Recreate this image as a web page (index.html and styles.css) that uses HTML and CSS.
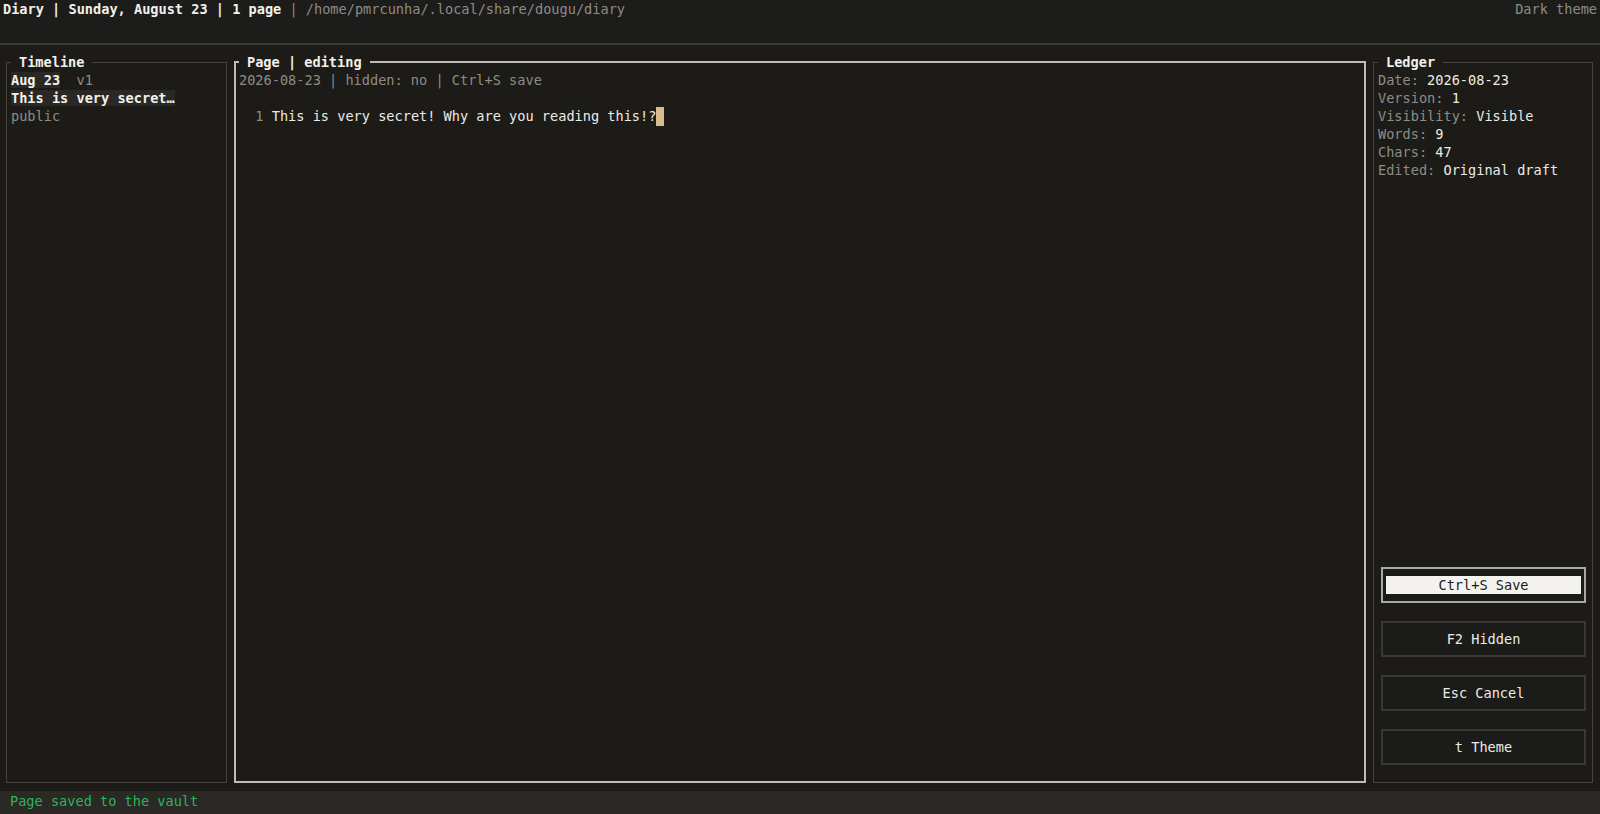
FILE: index.html
```html
<!DOCTYPE html>
<html lang="en">
<head>
<meta charset="utf-8">
<title>Diary</title>
<link rel="stylesheet" href="styles.css">
</head>
<body>
<div class="app">
  <header class="topbar">
    <div class="topbar-left"><span class="strong">Diary | Sunday, August 23 | 1 page</span><span class="dim"> | /home/pmrcunha/.local/share/dougu/diary</span></div>
    <div class="topbar-right dim">Dark theme</div>
  </header>

  <main class="workspace">
    <fieldset class="panel panel-timeline">
      <legend class="panel-title">Timeline</legend>
      <div class="entry">
        <div class="line"><span class="sel strong">Aug 23</span><span class="dim">  v1</span></div>
        <div class="line"><span class="sel strong">This is very secret…</span></div>
        <div class="line dim">public</div>
      </div>
    </fieldset>

    <fieldset class="panel panel-page">
      <legend class="panel-title">Page | editing</legend>
      <div class="line dim">2026-08-23 | hidden: no | Ctrl+S save</div>
      <div class="line"> </div>
      <div class="line editor-line"><span class="gutter">  1 </span><span class="text">This is very secret! Why are you reading this!?</span><span class="cursor"></span></div>
    </fieldset>

    <fieldset class="panel panel-ledger">
      <legend class="panel-title">Ledger</legend>
      <div class="ledger-info">
        <div class="line"><span class="dim">Date: </span>2026-08-23</div>
        <div class="line"><span class="dim">Version: </span>1</div>
        <div class="line"><span class="dim">Visibility: </span>Visible</div>
        <div class="line"><span class="dim">Words: </span>9</div>
        <div class="line"><span class="dim">Chars: </span>47</div>
        <div class="line"><span class="dim">Edited: </span>Original draft</div>
      </div>
      <div class="actions">
        <button class="btn btn-focus"><span class="btn-label">Ctrl+S Save</span></button>
        <button class="btn"><span class="btn-label">F2 Hidden</span></button>
        <button class="btn"><span class="btn-label">Esc Cancel</span></button>
        <button class="btn"><span class="btn-label">t Theme</span></button>
      </div>
    </fieldset>
  </main>

  <footer class="statusbar">Page saved to the vault</footer>
</div>
</body>
</html>
```

FILE: styles.css
```css
* { box-sizing: border-box; }

html, body {
  margin: 0;
  padding: 0;
  width: 1600px;
  height: 814px;
  overflow: hidden;
  background: #1c1b18;
}

body {
  font-family: "DejaVu Sans Mono", "Liberation Mono", monospace;
  font-size: 13.6px;
  line-height: 18px;
  color: #ecebe4;
}

.app {
  display: flex;
  flex-direction: column;
  height: 814px;
}

.strong { font-weight: bold; color: #f2f1ea; }
.dim { color: #8d8c86; font-weight: normal; }

.topbar {
  height: 45px;
  flex: none;
  display: flex;
  justify-content: space-between;
  align-items: flex-start;
  padding: 0 3px 0 3px;
  background: #1c1c1b;
  border-bottom: 2px solid #393835;
}

.topbar-left, .topbar-right { white-space: pre; height: 18px; }

.workspace {
  flex: 1;
  display: flex;
  gap: 7px;
  padding: 8px 7px 8px 6px;
  min-height: 0;
}

.panel {
  margin: 0;
  min-width: 0;
  border: 1px solid #45443f;
  padding: 0 4px 0 4px;
}

.panel-title {
  margin: 0;
  padding: 0 8px;
  font-weight: bold;
  color: #f2f1ea;
  line-height: 18px;
  white-space: pre;
}

.panel-timeline { width: 221px; flex: none; }
.panel-ledger {
  width: 220px;
  flex: none;
  display: flex;
  flex-direction: column;
  padding-bottom: 17px;
}

.panel-page {
  flex: 1;
  border: 2px solid #bdbcb5;
  padding: 0 3px;
}

.line { height: 18px; white-space: pre; }

.sel { background: #292824; }

.gutter { color: #8d8c86; }
.text { color: #ecebe4; }

.cursor {
  display: inline-block;
  width: 8px;
  height: 19px;
  vertical-align: top;
  background: #d8bc8f;
}

.ledger-info { flex: none; }

.actions {
  margin-top: auto;
  display: flex;
  flex-direction: column;
  gap: 18px;
  padding: 0 2px 0 3px;
}

.btn {
  display: flex;
  align-items: center;
  justify-content: center;
  height: 36px;
  margin: 0;
  padding: 0;
  font: inherit;
  color: #ecebe4;
  background: #1b1b19;
  border: 2px solid #393834;
  border-radius: 0;
  white-space: pre;
}

.btn-focus {
  border-color: #a9a8a1;
  padding: 0 3px;
}

.btn-focus .btn-label {
  display: block;
  width: 100%;
  height: 18px;
  line-height: 18px;
  text-align: center;
  background: #f3f2ee;
  color: #1b1b19;
}

.statusbar {
  height: 23px;
  flex: none;
  background: #2a2926;
  color: #2db35b;
  padding: 1px 10px 0;
  white-space: pre;
}
```
